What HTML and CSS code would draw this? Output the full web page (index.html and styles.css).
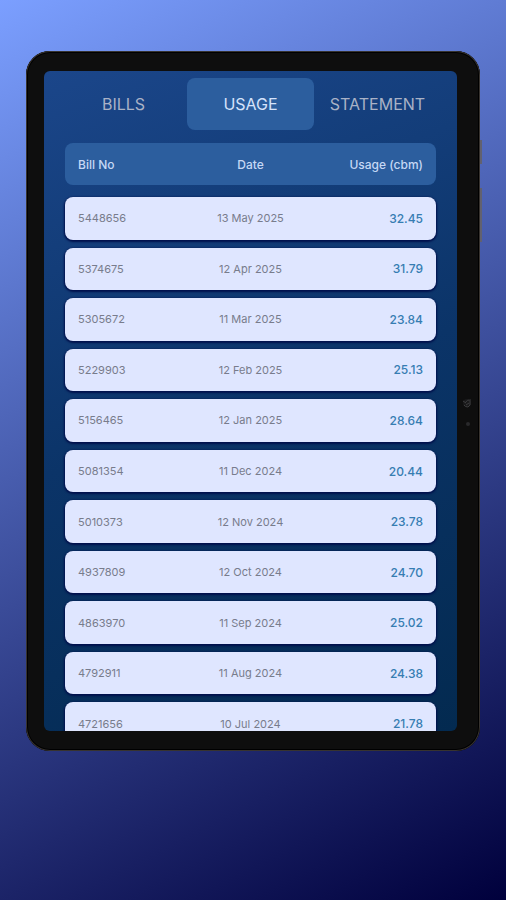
FILE: index.html
```html
<!DOCTYPE html>
<html lang="en">
<head>
    <meta charset="UTF-8">
    <meta name="viewport" content="width=device-width, initial-scale=1.0">
    <title>Usage</title>
    <link rel="stylesheet" href="styles.css">
</head>
<body>
    <div class="tablet">
        <span class="side-button power"></span>
        <span class="side-button volume"></span>
        <svg class="camera" viewBox="0 0 10 30" aria-hidden="true">
            <circle cx="5" cy="5" r="4" fill="#19191a"/>
            <path d="M1 3 L4 5 M3 5 Q5 1 9 2 M8 3 Q9 8 6 9 Q3 9 2 7 M4 7 L7 5" fill="none" stroke="#3c3c3e" stroke-width="1"/>
            <circle cx="6" cy="26" r="2" fill="#29292b"/>
        </svg>
        <main class="screen">
            <nav class="tabs">
                <button class="tab">BILLS</button>
                <button class="tab active">USAGE</button>
                <button class="tab">STATEMENT</button>
            </nav>
            <table class="usage">
                <thead>
                    <tr><th>Bill No</th><th>Date</th><th>Usage (cbm)</th></tr>
                </thead>
                <tbody>
                    <tr><td>5448656</td><td>13 May 2025</td><td>32.45</td></tr>
                    <tr><td>5374675</td><td>12 Apr 2025</td><td>31.79</td></tr>
                    <tr><td>5305672</td><td>11 Mar 2025</td><td>23.84</td></tr>
                    <tr><td>5229903</td><td>12 Feb 2025</td><td>25.13</td></tr>
                    <tr><td>5156465</td><td>12 Jan 2025</td><td>28.64</td></tr>
                    <tr><td>5081354</td><td>11 Dec 2024</td><td>20.44</td></tr>
                    <tr><td>5010373</td><td>12 Nov 2024</td><td>23.78</td></tr>
                    <tr><td>4937809</td><td>12 Oct 2024</td><td>24.70</td></tr>
                    <tr><td>4863970</td><td>11 Sep 2024</td><td>25.02</td></tr>
                    <tr><td>4792911</td><td>11 Aug 2024</td><td>24.38</td></tr>
                    <tr><td>4721656</td><td>10 Jul 2024</td><td>21.78</td></tr>
                </tbody>
            </table>
        </main>
    </div>
</body>
</html>
```
FILE: styles.css
```css
* {
    box-sizing: border-box;
}
body {
    margin: 0;
    min-height: 100vh;
    padding: 51px 26px 0;
    font-family: Inter, "Liberation Sans", sans-serif;
    background: linear-gradient(153deg, #7b9fff 0%, #00003c 100%);
}
.tablet {
    position: relative;
    display: flex;
    aspect-ratio: 227 / 350;
    padding: 20px 23px 20px 18px;
    background-color: #0e0e0e;
    border-radius: 24px;
    box-shadow: inset 0 0 0 1px #37332f, inset 0 0 0 2px #000;
}
.side-button {
    position: absolute;
    left: 100%;
    width: 2px;
    background-color: #62616f;
}
.power {
    top: 89px;
    height: 24px;
}
.volume {
    top: 137px;
    height: 54px;
}
.camera {
    position: absolute;
    right: 8px;
    top: 347px;
    width: 10px;
    height: 30px;
}
.screen {
    flex: 1;
    display: flex;
    flex-direction: column;
    overflow: hidden;
    padding: 7px 16px 0;
    border-radius: 6px;
    background: linear-gradient(160deg, #1b468a 0%, #0b3468 50%, #032a50 100%);
}
.tabs {
    display: flex;
    margin-bottom: 13px;
}
.tab {
    flex: 1 1 0;
    height: 52px;
    padding: 0;
    border: none;
    border-radius: 8px;
    background: none;
    color: #a9b2c6;
    font-family: inherit;
    font-size: 16px;
}
.tab.active {
    background-color: #2c5e9e;
    color: #d5e3fb;
}
.usage {
    flex: 1;
    display: flex;
    flex-direction: column;
    gap: 12px;
    margin: 0 5px;
}
.usage tbody {
    flex: 1;
    display: flex;
    flex-direction: column;
    gap: 8px;
    /* the last row runs off the bottom of the screen */
    margin-bottom: -14px;
}
.usage tr {
    display: grid;
    grid-template-columns: repeat(3, 1fr);
    align-items: center;
    padding: 0 13px;
    border-radius: 8px;
}
.usage thead tr {
    height: 42px;
    background-color: #2c5e9e;
}
.usage tbody tr {
    flex: 1;
    background-color: #dfe6ff;
    box-shadow: 0 1px 2px 1px #00104c;
}
.usage th,
.usage td {
    padding: 0;
    text-align: center;
}
.usage th {
    color: #c5d8f5;
    font-size: 12px;
    font-weight: 500;
}
.usage td {
    color: #787c8c;
    font-size: 11px;
}
.usage th:first-child,
.usage td:first-child {
    text-align: left;
}
.usage th:last-child,
.usage td:last-child {
    text-align: right;
}
.usage td:last-child {
    color: #367db2;
    font-size: 12px;
    font-weight: 500;
}
```
